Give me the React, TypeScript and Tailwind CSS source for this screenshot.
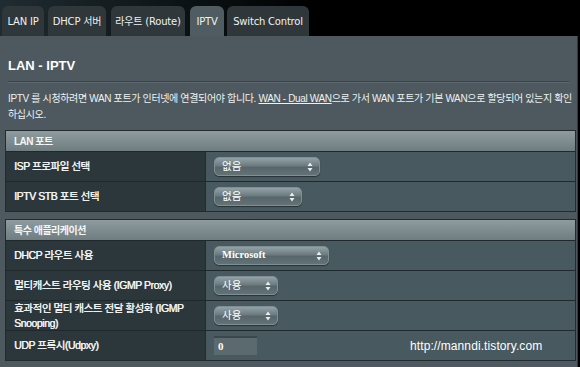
import React from "react";

const Arrows = () => (
  <svg width="6" height="10" viewBox="0 0 6 10" className="shrink-0">
    <path d="M3 0.5 L5.5 4 L0.5 4 Z" fill="#e8eef0" />
    <path d="M3 9.5 L5.5 6 L0.5 6 Z" fill="#e8eef0" />
  </svg>
);

function Sel({ w, text, serif }: { w: string; text: string; serif?: boolean }) {
  return (
    <div
      className={`${w} h-[19px] rounded-[5px] border border-[#7f8f93] bg-[linear-gradient(#93a2a6,#6b7b7f_45%,#56666a_55%,#627276)] shadow-[0_1px_1px_rgba(0,0,0,0.45)] flex items-center justify-between pl-[7px] pr-[6px]`}
    >
      <span
        className={`leading-none text-white ${
          serif
            ? "font-['Liberation_Serif',serif] text-[10.5px] font-bold"
            : "font-['Noto_Sans_CJK_KR',sans-serif] text-[10.5px]"
        }`}
      >
        {text}
      </span>
      <Arrows />
    </div>
  );
}

function Row({ label, children }: { label: React.ReactNode; children: React.ReactNode }) {
  return (
    <div className="flex h-[30px] border-t border-[#1f282b]">
      <div className="w-[200px] shrink-0 bg-[#2c373b] border-r border-[#222b2e] flex items-center pl-[8px] text-[10.5px] leading-[15px] tracking-[-0.45px] text-[#f2f4f5] [text-shadow:0.4px_0_0_#f2f4f5]">
        {label}
      </div>
      <div className="flex-1 bg-[#485a5f] flex items-center pl-[8px]">{children}</div>
    </div>
  );
}

function Header({ text }: { text: string }) {
  return (
    <div className="h-[20px] bg-[linear-gradient(#8e9ca0,#6f7d81)] flex items-center pl-[8px] text-[10px] font-bold tracking-[-0.5px] text-[#f4f6f7]">
      {text}
    </div>
  );
}

export default function App() {
  const tabs = [
    { t: "LAN IP", w: "w-[42px]", ml: "ml-[2px]" },
    { t: "DHCP 서버", w: "w-[58px]", ml: "ml-[4px]" },
    { t: "라우트 (Route)", w: "w-[74px]", ml: "ml-[5px]" },
    { t: "IPTV", w: "w-[34px]", ml: "ml-[5px]", active: true },
    { t: "Switch Control", w: "w-[82px]", ml: "ml-[3px]" },
  ];
  return (
    <div className="w-[580px] h-[367px] overflow-hidden bg-black font-['DejaVu_Sans','Noto_Sans_CJK_KR',sans-serif] antialiased">
      <div className="h-[36px] flex items-end bg-[linear-gradient(90deg,#1f2c31,#0a1012_35%,#000_55%)]">
        {tabs.map((tab) => (
          <div
            key={tab.t}
            className={`${tab.w} ${tab.ml} h-[30px] rounded-t-[6px] flex items-center justify-center text-[10px] tracking-[-0.2px] text-[#eef1f2] ${
              tab.active ? "bg-[#4f5c61]" : "bg-[#2f373a]"
            }`}
          >
            {tab.t}
          </div>
        ))}
      </div>
      <div className="h-[331px] w-[578px] bg-[#4d595e] border-r border-[#2f393c]">
        <div className="px-[8px] pt-[22px] text-[13px] font-bold text-white leading-[16px] font-['Liberation_Sans','Noto_Sans_CJK_KR',sans-serif]">
          LAN - IPTV
        </div>
        <div className="mx-[8px] mt-[7px] h-[2px] border-t border-[#39454a] border-b border-b-[#5d696e]" />
        <div className="px-[8px] pt-[8px] text-[10px] leading-[16px] text-[#eef1f2] font-['Liberation_Sans','Noto_Sans_CJK_KR',sans-serif]">
          <div className="whitespace-nowrap tracking-[-0.35px]">
            IPTV 를 시청하려면 WAN 포트가 인터넷에 연결되어야 합니다.{" "}
            <span className="underline">WAN - Dual WAN</span>으로 가서 WAN 포트가 기본 WAN으로 할당되어 있는지 확인
          </div>
          <div className="tracking-[-0.35px]">하십시오.</div>
        </div>
        <div className="mx-[5px] mt-[7px] w-[571px] border border-[#222b2e] font-['Liberation_Sans','Noto_Sans_CJK_KR',sans-serif]">
          <Header text="LAN 포트" />
          <Row label="ISP 프로파일 선택">
            <Sel w="w-[106px]" text="없음" />
          </Row>
          <Row label="IPTV STB 포트 선택">
            <Sel w="w-[88px]" text="없음" />
          </Row>
        </div>
        <div className="mx-[5px] mt-[7px] w-[571px] border border-[#222b2e] font-['Liberation_Sans','Noto_Sans_CJK_KR',sans-serif]">
          <Header text="특수 애플리케이션" />
          <Row label="DHCP 라우트 사용">
            <Sel w="w-[115px]" text="Microsoft" serif />
          </Row>
          <Row label="멀티캐스트 라우팅 사용 (IGMP Proxy)">
            <Sel w="w-[64px]" text="사용" />
          </Row>
          <Row
            label={
              <span>
                효과적인 멀티 캐스트 전달 활성화 (IGMP
                <br />
                Snooping)
              </span>
            }
          >
            <Sel w="w-[64px]" text="사용" />
          </Row>
          <Row label="UDP 프록시(Udpxy)">
            <div className="w-[43px] h-[19px] bg-[#5a6a6e] border-t-2 border-[#3a474b] flex items-center pl-[4px] text-[11px] font-bold text-white font-['Liberation_Serif',serif]">
              0
            </div>
            <div className="ml-[153px] text-[12px] text-white font-['Liberation_Sans',sans-serif] tracking-[0.1px]">
              http://manndi.tistory.com
            </div>
          </Row>
        </div>
      </div>
    </div>
  );
}
